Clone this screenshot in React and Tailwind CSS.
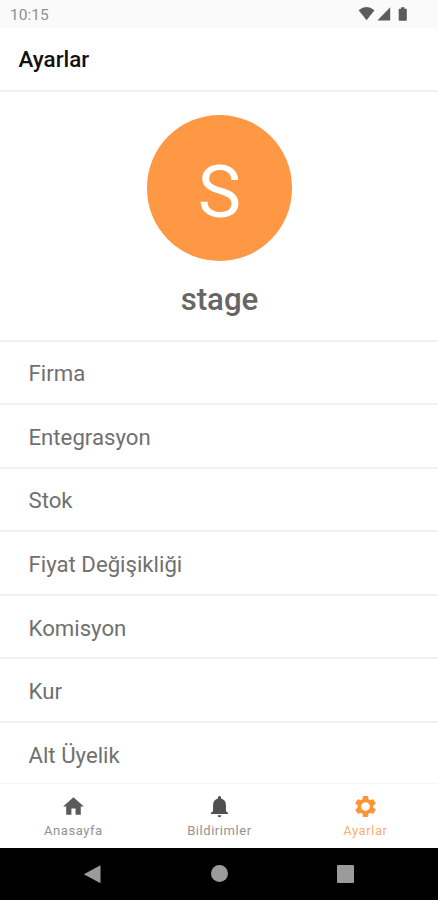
const rows = ['Firma', 'Entegrasyon', 'Stok', 'Fiyat Değişikliği', 'Komisyon', 'Kur', 'Alt Üyelik'];

const tabs = [
  { label: 'Anasayfa', color: 'text-[#5a5a5a]', text: 'text-[#929292]', d: 'M10 20v-6h4v6h5v-8h3L12 3 2 12h3v8z' },
  {
    label: 'Bildirimler',
    color: 'text-[#505050]',
    text: 'text-[#929292]',
    d: 'M10.300 20.300h3.400c0 1.200-.7 1.900-1.700 1.900s-1.700-.7-1.700-1.900zM18.200 16.600V10.500c0-3.200-1.700-5.500-4.700-6.300v-.7c0-.8-.6-1.500-1.500-1.500s-1.500.7-1.500 1.500v.7c-3 .8-4.700 3.100-4.700 6.300v6.100l-2 1.500v1h16.400v-1l-2-1.500z',
  },
  {
    label: 'Ayarlar',
    color: 'text-[#fe9432]',
    text: 'text-[#ffae70]',
    d: 'M12 16.200A4.200 4.200 0 0 1 7.800 12 4.200 4.200 0 0 1 12 7.800a4.200 4.200 0 0 1 4.200 4.200 4.200 4.200 0 0 1-4.200 4.200m7.430-3.230c.04-.32.07-.64.07-.97s-.03-.66-.07-1l2.110-1.630c.19-.15.24-.42.12-.64l-2-3.460c-.12-.22-.39-.31-.61-.22l-2.490 1c-.52-.39-1.060-.73-1.690-.98l-.37-2.650A.506.506 0 0 0 14 2h-4c-.25 0-.46.18-.5.420l-.37 2.650c-.63.25-1.170.59-1.690.98l-2.490-1c-.22-.09-.49 0-.61.22l-2 3.460c-.13.22-.07.49.12.64L4.570 11c-.04.34-.07.67-.07 1s.03.65.07.97l-2.110 1.660c-.19.15-.25.42-.12.64l2 3.460c.12.22.39.3.61.22l2.490-1.010c.52.4 1.060.74 1.690.99l.37 2.650c.04.24.25.42.5.42h4c.25 0 .46-.18.5-.42l.37-2.650c.63-.26 1.170-.59 1.690-.99l2.490 1.010c.22.08.49 0 .61-.22l2-3.460c.12-.22.07-.49-.12-.64z',
  },
];

function StatusBar() {
  return (
    <div className="flex h-7 shrink-0 items-start justify-between bg-[#fafafa] pl-[10px] pr-[30px]">
      <span className="pt-[5px] text-[15.500px] leading-5 text-[#909090]">10:15</span>
      <svg className="mt-[6px] h-4 w-[50px]" viewBox="0 0 50 16" fill="#5c5c5c">
        <path d="M.6 4.200Q8.500-2 16.500 4.200L8.600 14.200Z" />
        <path d="M32.200 1.200v13.200H19.400Z" />
        <path d="M41.300 2.800h1.700V1.200h3.500v1.600h1.800q.5 0 .5.600v10.500q0 .8-.8.800h-6.500q-.8 0-.8-.8V3.400q0-.6.6-.6Z" />
      </svg>
    </div>
  );
}

export default function App() {
  return (
    <div className="flex h-[900px] w-[438px] flex-col overflow-hidden bg-white font-['Roboto',sans-serif]">
      <StatusBar />
      <header className="flex h-[64px] shrink-0 items-center border-b-2 border-[#f0f0f0] pl-[18.500px]">
        <h1 className="-mt-px text-[22.400px] font-medium leading-7 text-[#111]">Ayarlar</h1>
      </header>
      <main className="flex min-h-0 flex-1 flex-col overflow-hidden">
        <section className="flex h-[247.500px] shrink-0 flex-col items-center pl-px pt-[23px]">
          <div className="flex size-[145.500px] items-center justify-center rounded-full bg-[#ff9845] text-[73px] leading-none text-white">
            <span className="pt-[9px]">S</span>
          </div>
          <p className="mt-[19.500px] text-[31.200px] font-medium leading-10 text-[#666]">stage</p>
        </section>
        <ul>
          {rows.map((row) => (
            <li key={row} className="flex h-[63.600px] items-center border-t-2 border-[#f1f1f1] pl-[28.500px] pt-[3px] text-[22.200px] text-[#707070]">
              {row}
            </li>
          ))}
        </ul>
      </main>
      <nav className="flex h-[65px] shrink-0 border-t border-[#f6f6f6] bg-white">
        {tabs.map((tab) => (
          <div key={tab.label} className="flex flex-1 flex-col items-center pl-[0.800px] pt-[10px]">
            <svg className={`size-[25px] shrink-0 ${tab.color}`} viewBox="0 0 24 24" fill="currentColor">
              <path d={tab.d} fillRule="evenodd" />
            </svg>
            <span className={`mt-px text-[13px] leading-[22px] tracking-[0.560px] ${tab.text}`}>{tab.label}</span>
          </div>
        ))}
      </nav>
      <div className="flex h-[52px] shrink-0 justify-between bg-black pl-[82.500px] pr-[84px] pt-[17px]">
        <svg className="size-[19px]" viewBox="0 0 19 19" fill="#9b9b9b">
          <path d="M17.500.3v17.900L.8 9.200Z" />
        </svg>
        <div className="size-[17px] rounded-full bg-[#9b9b9b]" />
        <div className="size-[17.500px] rounded-[1px] bg-[#9b9b9b]" />
      </div>
    </div>
  );
}
